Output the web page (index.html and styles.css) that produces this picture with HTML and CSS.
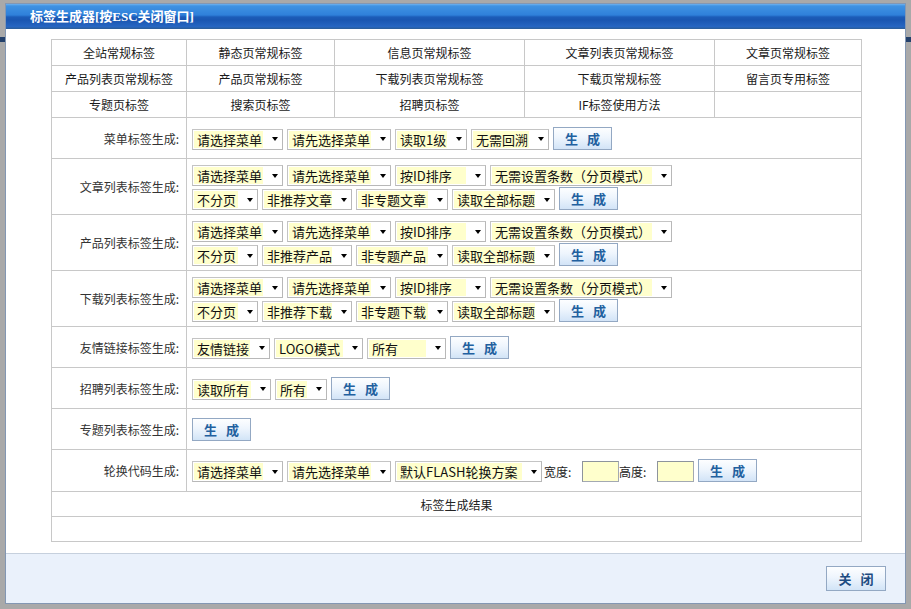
FILE: index.html
```html
<!DOCTYPE html>
<html lang="zh-CN">
<head>
<meta charset="utf-8">
<title>标签生成器</title>
<link rel="stylesheet" href="styles.css">
</head>
<body>
<div class="dialog">
  <div class="titlebar">标签生成器[按ESC关闭窗口]</div>
  <div class="content">
    <div class="grid">
      <div class="row h26 nav">
        <div class="cell k1">全站常规标签</div>
        <div class="cell k2">静态页常规标签</div>
        <div class="cell k3">信息页常规标签</div>
        <div class="cell k4">文章列表页常规标签</div>
        <div class="cell k5">文章页常规标签</div>
      </div>
      <div class="row h26 nav">
        <div class="cell k1">产品列表页常规标签</div>
        <div class="cell k2">产品页常规标签</div>
        <div class="cell k3">下载列表页常规标签</div>
        <div class="cell k4">下载页常规标签</div>
        <div class="cell k5">留言页专用标签</div>
      </div>
      <div class="row h26 nav">
        <div class="cell k1">专题页标签</div>
        <div class="cell k2">搜索页标签</div>
        <div class="cell k3">招聘页标签</div>
        <div class="cell k4">IF标签使用方法</div>
        <div class="cell k5"></div>
      </div>

      <div class="row h41">
        <div class="cell lab">菜单标签生成:</div>
        <div class="cell val">
          <div class="line">
            <span class="sel w91"><span class="t">请选择菜单</span><span class="arr"></span></span>
            <span class="sel w104"><span class="t">请先选择菜单</span><span class="arr"></span></span>
            <span class="sel w72"><span class="t">读取1级</span><span class="arr"></span></span>
            <span class="sel w78"><span class="t">无需回溯</span><span class="arr"></span></span>
            <span class="btn gen">生 成</span>
          </div>
        </div>
      </div>

      <div class="row h56">
        <div class="cell lab">文章列表标签生成:</div>
        <div class="cell val">
          <div class="line">
            <span class="sel w91"><span class="t">请选择菜单</span><span class="arr"></span></span>
            <span class="sel w104"><span class="t">请先选择菜单</span><span class="arr"></span></span>
            <span class="sel w91"><span class="t">按ID排序</span><span class="arr"></span></span>
            <span class="sel w182"><span class="t">无需设置条数（分页模式）</span><span class="arr"></span></span>
          </div>
          <div class="line">
            <span class="sel w66"><span class="t">不分页</span><span class="arr"></span></span>
            <span class="sel w90"><span class="t">非推荐文章</span><span class="arr"></span></span>
            <span class="sel w92"><span class="t">非专题文章</span><span class="arr"></span></span>
            <span class="sel w103"><span class="t">读取全部标题</span><span class="arr"></span></span>
            <span class="btn gen">生 成</span>
          </div>
        </div>
      </div>

      <div class="row h56">
        <div class="cell lab">产品列表标签生成:</div>
        <div class="cell val">
          <div class="line">
            <span class="sel w91"><span class="t">请选择菜单</span><span class="arr"></span></span>
            <span class="sel w104"><span class="t">请先选择菜单</span><span class="arr"></span></span>
            <span class="sel w91"><span class="t">按ID排序</span><span class="arr"></span></span>
            <span class="sel w182"><span class="t">无需设置条数（分页模式）</span><span class="arr"></span></span>
          </div>
          <div class="line">
            <span class="sel w66"><span class="t">不分页</span><span class="arr"></span></span>
            <span class="sel w90"><span class="t">非推荐产品</span><span class="arr"></span></span>
            <span class="sel w92"><span class="t">非专题产品</span><span class="arr"></span></span>
            <span class="sel w103"><span class="t">读取全部标题</span><span class="arr"></span></span>
            <span class="btn gen">生 成</span>
          </div>
        </div>
      </div>

      <div class="row h56">
        <div class="cell lab">下载列表标签生成:</div>
        <div class="cell val">
          <div class="line">
            <span class="sel w91"><span class="t">请选择菜单</span><span class="arr"></span></span>
            <span class="sel w104"><span class="t">请先选择菜单</span><span class="arr"></span></span>
            <span class="sel w91"><span class="t">按ID排序</span><span class="arr"></span></span>
            <span class="sel w182"><span class="t">无需设置条数（分页模式）</span><span class="arr"></span></span>
          </div>
          <div class="line">
            <span class="sel w66"><span class="t">不分页</span><span class="arr"></span></span>
            <span class="sel w90"><span class="t">非推荐下载</span><span class="arr"></span></span>
            <span class="sel w92"><span class="t">非专题下载</span><span class="arr"></span></span>
            <span class="sel w103"><span class="t">读取全部标题</span><span class="arr"></span></span>
            <span class="btn gen">生 成</span>
          </div>
        </div>
      </div>

      <div class="row h41">
        <div class="cell lab">友情链接标签生成:</div>
        <div class="cell val">
          <div class="line">
            <span class="sel w78"><span class="t">友情链接</span><span class="arr"></span></span>
            <span class="sel w89"><span class="t">LOGO模式</span><span class="arr"></span></span>
            <span class="sel w79"><span class="t">所有</span><span class="arr"></span></span>
            <span class="btn gen">生 成</span>
          </div>
        </div>
      </div>

      <div class="row h41">
        <div class="cell lab">招聘列表标签生成:</div>
        <div class="cell val">
          <div class="line">
            <span class="sel w79"><span class="t">读取所有</span><span class="arr"></span></span>
            <span class="sel w52"><span class="t">所有</span><span class="arr"></span></span>
            <span class="btn gen">生 成</span>
          </div>
        </div>
      </div>

      <div class="row h41">
        <div class="cell lab">专题列表标签生成:</div>
        <div class="cell val">
          <div class="line">
            <span class="btn gen">生 成</span>
          </div>
        </div>
      </div>

      <div class="row h42">
        <div class="cell lab">轮换代码生成:</div>
        <div class="cell val">
          <div class="line">
            <span class="sel w91"><span class="t">请选择菜单</span><span class="arr"></span></span>
            <span class="sel w104"><span class="t">请先选择菜单</span><span class="arr"></span></span>
            <span class="sel w147"><span class="t">默认FLASH轮换方案</span><span class="arr"></span></span>
            <span class="dims">
              <span class="dim-lab">宽度:</span><span class="inp"></span>
              <span class="dim-lab">高度:</span><span class="inp"></span>
            </span>
            <span class="btn gen">生 成</span>
          </div>
        </div>
      </div>

      <div class="row h25">
        <div class="cell full">标签生成结果</div>
      </div>
      <div class="row h25">
        <div class="cell full"></div>
      </div>
    </div>
  </div>
  <div class="footer">
    <span class="btn close">关 闭</span>
  </div>
</div>
</body>
</html>
```
FILE: styles.css
```css
html, body {
  margin: 0;
  padding: 0;
}
body {
  width: 911px;
  height: 609px;
  overflow: hidden;
  background:
    linear-gradient(to bottom, transparent 37px, #23406b 37px, #23406b 42px, transparent 42px),
    #a9a9a9;
  font-family: "Noto Sans CJK SC", "Liberation Sans", sans-serif;
  font-size: 12px;
  color: #222;
}
.dialog {
  margin: 3px 0 0 5px;
  width: 901px;
  height: 601px;
  box-sizing: border-box;
  border: 1px solid #8397b3;
  display: flex;
  flex-direction: column;
  background: #fff;
}
.titlebar {
  height: 25px;
  line-height: 25px;
  padding-left: 24px;
  color: #fff;
  font-family: "Liberation Serif", "Noto Sans CJK SC", serif;
  font-weight: bold;
  font-size: 13px;
  background: linear-gradient(to bottom,
    #6fb2ee 0px, #3f92e2 2px, #2f80da 11px,
    #1c5cb8 13px, #1a56b1 16px, #2767c3 23px, #2b5f9f 24px, #2b5f9f 25px);
}
.content {
  height: 524px;
  box-sizing: border-box;
  padding: 10px 0 0 45px;
  background: #fff;
}
.grid {
  width: 811px;
  border-top: 1px solid #c8c8c8;
  border-left: 1px solid #c8c8c8;
  box-sizing: border-box;
}
.row {
  display: flex;
  box-sizing: border-box;
  border-bottom: 1px solid #c8c8c8;
}
.h26 { height: 26px; }
.h41 { height: 41px; }
.h42 { height: 42px; }
.h56 { height: 56px; }
.h25 { height: 25px; }

.cell {
  box-sizing: border-box;
  border-right: 1px solid #c8c8c8;
  display: flex;
  align-items: center;
}
.nav .cell {
  justify-content: center;
  color: #1a1a1a;
}
.k1 { width: 135px; }
.k2 { width: 148px; }
.k3 { width: 190px; }
.k4 { width: 190px; }
.k5 { width: 147px; }

.lab {
  width: 135px;
  justify-content: flex-end;
  padding-right: 7px;
  color: #333;
}
.val {
  flex: 1;
  padding-left: 5px;
  flex-direction: column;
  align-items: flex-start;
  justify-content: center;
  gap: 1px;
}
.full {
  flex: 1;
  justify-content: center;
  color: #222;
}
.line {
  display: flex;
  align-items: center;
  gap: 4px;
}

.sel {
  display: flex;
  height: 21px;
  margin-top: 2px;
  box-sizing: border-box;
  border: 1px solid #c4c4c4;
  border-right-color: #b8b8b8;
  border-bottom-color: #b8b8b8;
  padding: 1px;
  background: #fff;
}
.sel .t {
  flex: 1;
  background: #ffffcc;
  font-size: 13px;
  line-height: 17px;
  padding-left: 3px;
  white-space: nowrap;
  overflow: hidden;
  color: #111;
}
.sel .arr {
  width: 18px;
  display: flex;
  align-items: center;
  justify-content: flex-end;
  padding-right: 3px;
  box-sizing: border-box;
}
.sel .arr::after {
  content: "";
  width: 0;
  height: 0;
  border-left: 3.5px solid transparent;
  border-right: 3.5px solid transparent;
  border-top: 4px solid #000;
}
.w52 { width: 52px; }
.w66 { width: 66px; }
.w72 { width: 72px; }
.w78 { width: 78px; }
.w79 { width: 79px; }
.w89 { width: 89px; }
.w90 { width: 90px; }
.w91 { width: 91px; }
.w92 { width: 92px; }
.w103 { width: 103px; }
.w104 { width: 104px; }
.w147 { width: 147px; }
.w182 { width: 182px; }

.btn {
  display: flex;
  align-items: center;
  justify-content: center;
  box-sizing: border-box;
  border: 1px solid #93a8c3;
  background: linear-gradient(to bottom, #fdfeff 0%, #eef5fd 45%, #d2e4f7 100%);
  font-weight: bold;
  font-size: 13px;
  word-spacing: 6px;
  white-space: pre;
}
.gen {
  width: 59px;
  height: 23px;
  color: #22609f;
}
.close {
  width: 60px;
  height: 25px;
  color: #1d4c82;
}

.dims {
  display: flex;
  align-items: center;
  margin-left: -2px;
  margin-top: 2px;
}
.dim-lab {
  font-size: 12px;
  color: #222;
  width: 38px;
  white-space: nowrap;
}
.inp {
  width: 37px;
  height: 21px;
  box-sizing: border-box;
  border: 1px solid #a3a9b2;
  border-top-color: #8e949c;
  border-left-color: #8e949c;
  background: #ffffcc;
}

.footer {
  flex: 1;
  border-top: 1px solid #c6d0dd;
  background: #eaf1fb;
  display: flex;
  justify-content: flex-end;
  align-items: flex-start;
  padding: 12px 19px 0 0;
}
```
